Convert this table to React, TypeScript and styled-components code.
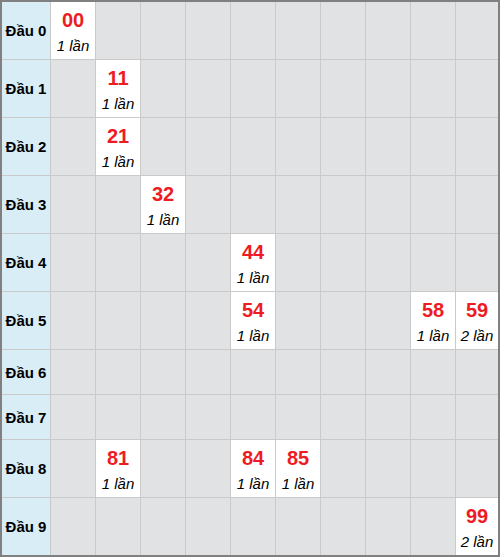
import React from "react";
import styled, { createGlobalStyle } from "styled-components";

const hits: Record<string, number> = {
  "00": 1,
  "11": 1,
  "21": 1,
  "32": 1,
  "44": 1,
  "54": 1,
  "58": 1,
  "59": 2,
  "81": 1,
  "84": 1,
  "85": 1,
  "99": 2,
};

const heads = [0, 1, 2, 3, 4, 5, 6, 7, 8, 9];
const tails = [0, 1, 2, 3, 4, 5, 6, 7, 8, 9];

export default function App() {
  const rowHeights = heads.map((h) =>
    tails.some((t) => hits[`${h}${t}`]) ? "57px" : "44px"
  );
  return (
    <>
      <GlobalStyle />
      <Table $rows={rowHeights.join(" ")}>
        {heads.map((h) => (
          <React.Fragment key={h}>
            <HeadCell>Đầu {h}</HeadCell>
            {tails.map((t) => {
              const num = `${h}${t}`;
              const count = hits[num];
              return count ? (
                <Cell key={num} $hit>
                  <Number>{num}</Number>
                  <Count>{count} lần</Count>
                </Cell>
              ) : (
                <Cell key={num} />
              );
            })}
          </React.Fragment>
        ))}
      </Table>
    </>
  );
}

const GlobalStyle = createGlobalStyle`
  body {
    margin: 0;
    background: #ffffff;
    font-family: "Liberation Sans", Arial, sans-serif;
  }
`;

const Table = styled.div<{ $rows: string }>`
  display: grid;
  grid-template-columns: 48px repeat(9, 44px) 42px;
  grid-template-rows: ${(p) => p.$rows};
  gap: 1px;
  width: 500px;
  height: 557px;
  box-sizing: border-box;
  border: 2px solid #808080;
  background: #cacaca;
`;

const HeadCell = styled.div`
  display: flex;
  align-items: center;
  justify-content: center;
  background: #d9edf7;
  color: #000;
  font-weight: bold;
  font-size: 15px;
`;

const Cell = styled.div<{ $hit?: boolean }>`
  display: flex;
  flex-direction: column;
  align-items: center;
  justify-content: center;
  gap: 6px;
  padding-top: 3px;
  background: ${(p) => (p.$hit ? "#ffffff" : "#e1e2e4")};
`;

const Number = styled.span`
  color: #ed1c24;
  font-weight: bold;
  font-size: 20px;
  line-height: 22px;
`;

const Count = styled.span`
  color: #000;
  font-style: italic;
  font-size: 15px;
  line-height: 18px;
  white-space: nowrap;
`;
